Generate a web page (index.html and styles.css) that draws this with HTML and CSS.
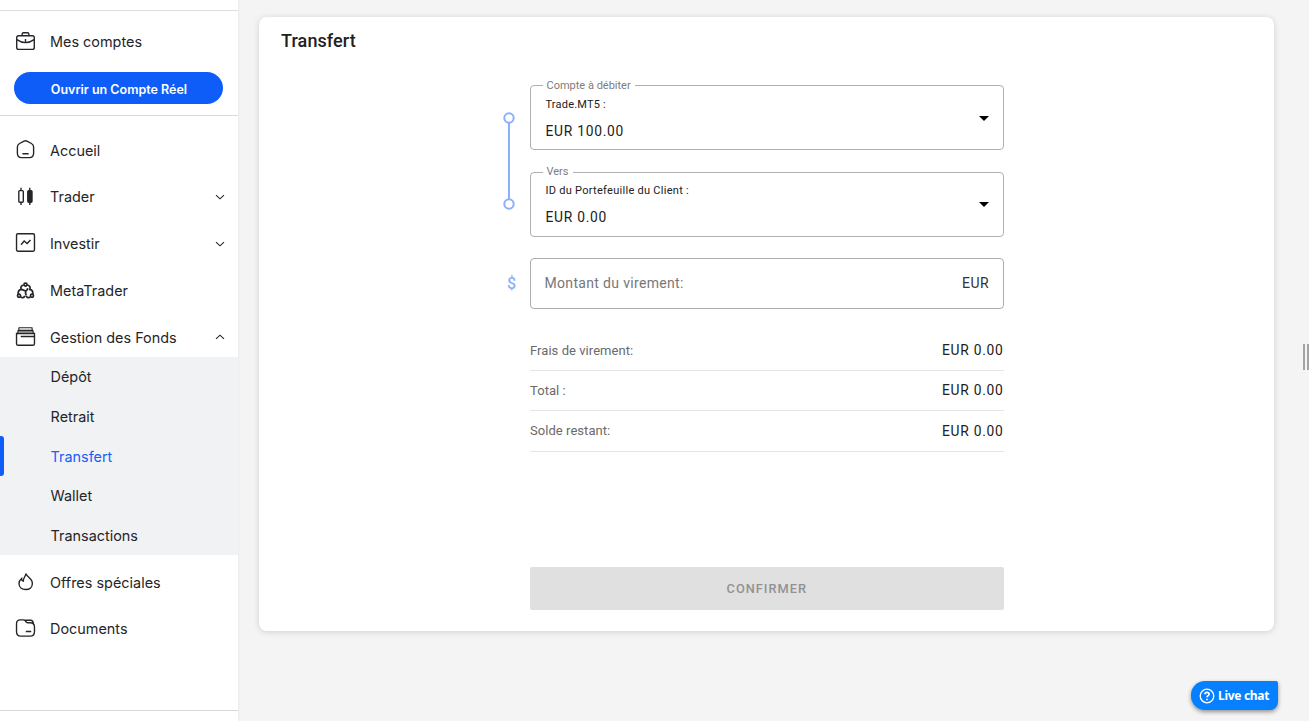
FILE: index.html
```html
<!DOCTYPE html>
<html lang="fr">
<head>
<meta charset="utf-8">
<title>Transfert</title>
<link rel="stylesheet" href="styles.css">
</head>
<body>
<div class="app">
  <aside class="sidebar">
    <div class="accounts">
      <a class="nav-item">
        <svg class="icon" viewBox="0 0 22 22"><rect x="1.800" y="5" width="18.400" height="14.200" rx="2"/><path d="M7.500 5V3.200a1.400 1.400 0 0 1 1.400-1.400h4.200a1.400 1.400 0 0 1 1.400 1.400V5M2 9c4 2.800 6 3.200 9 3.200S16 11.800 20 9M11 8.500v3"/></svg>
        <span class="label">Mes comptes</span>
      </a>
      <button class="open-account">Ouvrir un Compte Réel</button>
    </div>
    <nav class="menu">
      <a class="nav-item">
        <svg class="icon" viewBox="0 0 22 22"><path d="M9.500 2.200Q11 1.400 12.500 2.200L17.200 4.700Q19.500 6 19.500 8.500V15Q19.500 19.500 15 19.500H7Q2.500 19.500 2.500 15V8.500Q2.500 6 4.800 4.700ZM7.800 15.500H14.300"/></svg>
        <span class="label">Accueil</span>
      </a>
      <a class="nav-item">
        <svg class="icon" viewBox="0 0 22 22"><path d="M6.300 1.800V5M6.300 17V20M15.500 1.800V20"/><rect x="4" y="4.800" width="4.700" height="12.200" rx="1"/><rect class="solid" x="13.400" y="4.800" width="4.400" height="12.200" rx="1"/></svg>
        <span class="label">Trader</span>
        <svg class="chevron" viewBox="0 0 10 10"><path d="m1 3.200 4 3.600 4-3.600"/></svg>
      </a>
      <a class="nav-item">
        <svg class="icon" viewBox="0 0 22 22"><rect x="1.600" y="1.800" width="18.800" height="18.400" rx="1.500"/><path d="m6.300 13.300 3.300-3.800 3.100 2.600 3.500-3.800"/></svg>
        <span class="label">Investir</span>
        <svg class="chevron" viewBox="0 0 10 10"><path d="m1 3.200 4 3.600 4-3.600"/></svg>
      </a>
      <a class="nav-item">
        <svg class="icon heavy" viewBox="0 0 22 22"><circle cx="11" cy="4.800" r="1.600"/><circle cx="4.200" cy="16.500" r="1.600"/><circle cx="17.800" cy="16.500" r="1.600"/><path d="M9 5.200C6.500 5.800 5.500 8 6.500 9.800C4 10.500 3 12.500 3.500 14.700M13 5.200C15.500 5.800 16.500 8 15.500 9.800C18 10.500 19 12.500 18.500 14.700M6 17.500C7.500 19.300 9.600 18.700 10.200 16.500M16 17.500C14.500 19.300 12.400 18.700 11.800 16.500M6.700 9.800C9 9.800 10 12.300 12 11C13 10.400 13.200 9.500 13.100 8.500M11.500 11.500C10.500 13 11 14.500 11.800 16"/></svg>
        <span class="label">MetaTrader</span>
      </a>
      <div class="group">
        <a class="nav-item">
          <svg class="icon" viewBox="0 0 22 22"><path class="shade" d="M3.500 3.300H18.500L19 7.500H3Z"/><path class="thin" d="M3.900 4.800L4.200 1.800H17.800L18.100 4.800M2.800 7.800L3.200 4.800H18.800L19.200 7.800"/><path d="M1.600 7.800H20.400V18.500Q20.400 20.200 18.700 20.200H3.300Q1.600 20.200 1.600 18.500ZM6 11H20"/></svg>
          <span class="label">Gestion des Fonds</span>
          <svg class="chevron" viewBox="0 0 10 10"><path d="m1 6.800 4-3.600 4 3.600"/></svg>
        </a>
        <div class="submenu">
          <a class="sub-item">Dépôt</a>
          <a class="sub-item">Retrait</a>
          <a class="sub-item active">Transfert</a>
          <a class="sub-item">Wallet</a>
          <a class="sub-item">Transactions</a>
        </div>
      </div>
      <a class="nav-item low">
        <svg class="icon" viewBox="0 0 22 22"><path d="M11.300 1.700C11.500 4.300 8.300 6.500 8.700 9.500C7.500 9.200 6.800 8 6.900 6.800C5.200 8.200 4.200 10.100 4.200 12C4.200 16 7.200 18.400 11.200 18.400C15.500 18.400 18.200 15.800 18.200 12C18.200 9.300 16.400 7.300 14.500 5.600C13.200 4.500 12.200 3.300 11.300 1.700Z"/></svg>
        <span class="label">Offres spéciales</span>
      </a>
      <a class="nav-item low documents">
        <svg class="icon" viewBox="0 0 22 22"><path d="M1.600 6Q1.600 2 5.600 2H8.500Q10 2 11 3.200L12 4.500Q12.500 5 13.500 5H16Q20.400 5 20.400 9.500V14.500Q20.400 19 16 19H6Q1.600 19 1.600 14.500ZM10 2.400H16.500Q18.800 2.400 19.200 5.500M11.300 14.200H17"/></svg>
        <span class="label">Documents</span>
      </a>
    </nav>
  </aside>
  <main class="content">
    <section class="card">
      <h1 class="title">Transfert</h1>
      <div class="form">
        <div class="accounts-pair">
          <svg class="link-line" viewBox="0 0 12 98"><path d="M6 11V87"/><circle cx="6" cy="6" r="4.700"/><circle cx="6" cy="92" r="4.700"/></svg>
          <div class="select">
            <span class="legend">Compte à débiter</span>
            <div class="select-text"><span class="name">Trade.MT5 :</span><span class="amount">EUR 100.00</span></div>
            <span class="arrow"></span>
          </div>
          <div class="select">
            <span class="legend">Vers</span>
            <div class="select-text"><span class="name wide">ID du Portefeuille du Client :</span><span class="amount">EUR 0.00</span></div>
            <span class="arrow"></span>
          </div>
        </div>
        <div class="sum-field">
          <span class="dollar">$</span>
          <span class="placeholder">Montant du virement:</span>
          <span class="currency">EUR</span>
        </div>
        <div class="summary">
          <div class="line"><span class="key">Frais de virement:</span><span class="amount">EUR 0.00</span></div>
          <div class="line"><span class="key">Total :</span><span class="amount">EUR 0.00</span></div>
          <div class="line last"><span class="key">Solde restant:</span><span class="amount">EUR 0.00</span></div>
        </div>
        <button class="confirm">CONFIRMER</button>
      </div>
    </section>
  </main>
  <div class="handle"></div>
  <button class="chat">
    <svg class="chat-icon" viewBox="0 0 16 16"><circle cx="8" cy="8" r="6.800"/><path class="question" d="M5.900 6.200Q6 4.300 8 4.300Q10.100 4.300 10.100 6.100Q10.100 7.100 9 7.700Q8 8.200 8 9.300M8 10.700V12.200"/></svg>
    <span class="chat-label">Live chat</span>
  </button>
</div>
</body>
</html>
```

FILE: styles.css
```css
* { box-sizing: border-box; }
body { margin: 0; background: #f4f4f4; font-family: Roboto, sans-serif; color: #212121; }
button { border: 0; padding: 0; font-family: inherit; }
.app { position: relative; display: flex; height: 721px; overflow: hidden; }

.sidebar { width: 238px; flex: none; background: #fff; box-shadow: 1px 0 3px rgba(0,0,0,.04); padding-top: 10px; font-family: Inter, sans-serif; }
.accounts { height: 106px; border-top: 1px solid #dedede; border-bottom: 1px solid #d9d9de; padding-top: 11px; }
.nav-item { display: flex; align-items: center; height: 39px; padding: 0 13.500px 0 15px; font-size: 14.400px; color: #252529; }
.accounts .nav-item { padding-bottom: 1px; }
.icon { width: 21px; height: 21px; flex: none; margin: -1.500px 13.600px 0 0; fill: none; stroke: #252529; stroke-width: 1.450; }
.accounts .icon { margin-top: 0; }
.icon .solid { fill: #252529; }
.icon .shade { fill: #aaa; stroke: none; }
.icon .thin { stroke-width: 1.200; }
.low .icon { margin-top: 0; }
.icon.heavy { margin-top: 0; stroke-width: 1.800; }
.label { flex: 1; margin-left: .400px; letter-spacing: .020px; }
.chevron { width: 10px; height: 10px; fill: none; stroke: #252529; stroke-width: 1.100; }
.open-account { display: block; width: 209px; height: 32px; margin: 11px 0 0 14px; padding: 3px 0 0 1px; border-radius: 16px; background: #0f5df8; color: #fff; font-size: 12.500px; font-weight: 600; }
.menu { display: flex; flex-direction: column; gap: 7.800px; height: 595px; padding-top: 14.600px; border-bottom: 1px solid #d9d9de; }
.group { padding-top: .200px; }
.submenu { background: #f0f2f4; }
.sub-item { display: flex; align-items: center; height: 39.600px; padding-left: 50.600px; font-size: 14.400px; color: #252529; position: relative; }
.sub-item.active { padding-top: 1px; color: #175ff5; }
.sub-item.active::before { content: ""; position: absolute; left: 0; top: 0; width: 4px; height: 40px; background: #0f5df8; border-radius: 0 3px 3px 0; }
.documents { padding-bottom: 1px; }

.content { flex: 1; padding: 17px 35px 0 21px; }
.card { height: 614px; background: #fff; border-radius: 8px; box-shadow: 0 1px 6px rgba(0,0,0,.15); }
.title { margin: 0; padding: 13px 0 0 22px; height: 68px; font-size: 18px; line-height: 22px; font-weight: 500; letter-spacing: .100px; }
.form { width: 473.600px; margin-left: 271px; }
.accounts-pair { position: relative; display: flex; flex-direction: column; gap: 22px; }
.link-line { position: absolute; left: -27.500px; top: 27px; width: 12px; height: 98px; fill: none; stroke: #8ab0fa; stroke-width: 2; }
.select { position: relative; display: flex; align-items: center; justify-content: space-between; height: 65px; border: 1px solid #b0b0b0; border-radius: 4px; padding: 0 14px; }
.select + .select { height: 65px; }
.legend { position: absolute; left: 12px; top: -7px; padding: 0 4px 0 3.500px; background: #fff; color: #7d7d7d; font-size: 11px; line-height: 14px; }
.select + .select .legend { top: -8px; }
.select-text { display: flex; flex-direction: column; gap: 10px; padding: 3px 0 0 .500px; }
.select + .select .select-text { padding-top: 1px; }
.name { font-size: 11px; line-height: 14px; letter-spacing: .200px; }
.name.wide { letter-spacing: .280px; }
.amount { font-size: 13.800px; line-height: 18px; letter-spacing: .750px; }
.arrow { margin-top: 1px; border: 5px solid transparent; border-top-color: #000; border-bottom: 0; }
.select + .select .arrow { margin-top: -1px; }
.sum-field { position: relative; display: flex; align-items: center; justify-content: space-between; height: 51px; margin-top: 21px; padding: 0 13.500px 2px; border: 1px solid #adadad; border-radius: 4px; }
.dollar { position: absolute; left: -24px; top: 15px; font-size: 16px; line-height: 20px; color: #8ab0fa; font-weight: 500; }
.placeholder { font-size: 14px; color: #777; letter-spacing: .330px; }
.currency { font-size: 14px; letter-spacing: .500px; color: #333; }
.summary { margin-top: 22px; }
.line { display: flex; align-items: center; justify-content: space-between; height: 40px; padding-bottom: 1px; border-bottom: 1px solid #e5e5e5; }
.line.last { height: 41px; }
.last .amount { padding-top: 1px; }
.key { font-size: 13px; color: #6a6a6a; letter-spacing: .050px; }
.confirm { display: block; width: 100%; height: 43px; margin-top: 115px; border-radius: 2px; background: #e0e0e0; color: #929292; font-size: 12.800px; font-weight: 500; letter-spacing: 1px; }

.handle { position: absolute; right: 0; top: 344px; width: 6px; height: 26px; border: solid #a3a3a3; border-width: 0 2px; }
.chat { position: absolute; left: 1191px; top: 681px; width: 87px; height: 29px; display: flex; align-items: center; gap: 3px; padding-left: 8px; border-radius: 14px 2px 8px 14px; background: #0680ff; color: #fff; box-shadow: 0 2px 4px rgba(0,0,0,.4); }
.chat-icon { width: 16px; height: 16px; fill: none; stroke: #fff; stroke-width: 1.300; }
.chat-icon .question { stroke-width: 1.700; }
.chat-label { font: 700 12px "Noto Sans", sans-serif; letter-spacing: -.300px; white-space: nowrap; }
```
